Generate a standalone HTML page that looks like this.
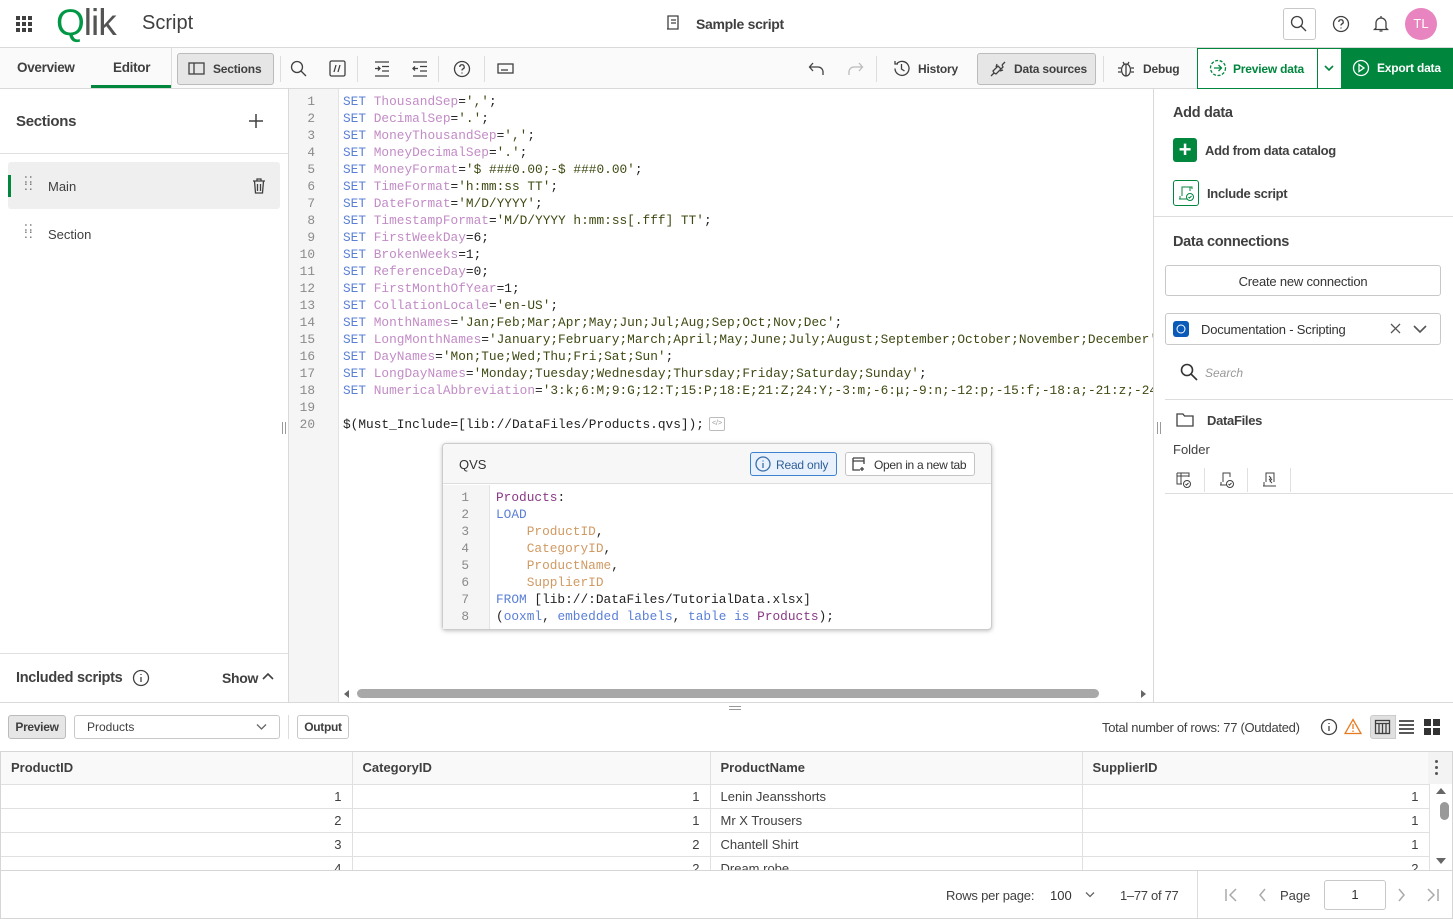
<!DOCTYPE html>
<html><head><meta charset="utf-8"><style>
*{box-sizing:border-box;margin:0;padding:0}
body{width:1453px;height:919px;position:relative;overflow:hidden;font-family:"Liberation Sans",sans-serif;color:#404040;background:#fff;font-size:13px}
.a{position:absolute}
.mono{font-family:"Liberation Mono",monospace;font-size:12.8px}
.k{color:#5a7fd6}.v{color:#c28bc6}.s{color:#3d4a12}.f{color:#d09a63}.t{color:#8a3a86}
.ln{position:absolute;left:0;width:26px;text-align:right;color:#8a8a8a}
.line{position:absolute;white-space:pre;color:#222}
svg{position:absolute;fill:none;stroke:#404040;stroke-width:1.3}
.btn{position:absolute;border:1px solid #c8c8c8;border-radius:3px;background:#fff}
.sep{position:absolute;width:1px;background:#ddd}
.tb{font-size:12px;font-weight:bold;letter-spacing:-0.2px}
td{border-right:1px solid #e0e0e0;border-bottom:1px solid #e0e0e0;height:24px;padding:0 10px;font-size:13px}
</style></head><body>

<!-- Top bar -->
<div class="a" style="left:16px;top:16px;width:16px;height:16px;display:grid;grid-template-columns:repeat(3,4px);gap:2px">
<i style="background:#404040"></i><i style="background:#404040"></i><i style="background:#404040"></i><i style="background:#404040"></i><i style="background:#404040"></i><i style="background:#404040"></i><i style="background:#404040"></i><i style="background:#404040"></i><i style="background:#404040"></i></div>
<div class="a" style="left:56px;top:2px;font-size:37px;color:#545454;letter-spacing:-1px"><span style="color:#009845">Q</span>lik</div>
<div class="a" style="left:142px;top:12px;font-size:20px;color:#404040">Script</div>
<svg style="left:664px;top:14px" width="18" height="18" viewBox="0 0 18 18"><path d="M4 2h10v13H4zM7 6h5M7 9h5M3 15h8"/></svg>
<div class="a" style="left:696px;top:16px;font-size:14px;font-weight:bold;color:#404040;letter-spacing:-0.3px">Sample script</div>
<div class="btn" style="left:1283px;top:8px;width:33px;height:32px"></div>
<svg style="left:1290px;top:15px" width="18" height="18"><circle cx="7" cy="7" r="5.5"/><path d="M11 11l5 5"/></svg>
<svg style="left:1332px;top:15px" width="18" height="18"><circle cx="9" cy="9" r="7.5"/><path d="M6.8 7a2.2 2.2 0 1 1 3 2c-.6.3-.8.7-.8 1.5M9 12.5v1"/></svg>
<svg style="left:1372px;top:14px" width="18" height="20"><path d="M4 14V9a5 5 0 0 1 10 0v5l1.5 1.5h-13zM7.5 17h3M9 2v2"/></svg>
<div class="a" style="left:1405px;top:8px;width:32px;height:32px;border-radius:50%;background:#e885c0;color:#fff;font-size:13px;text-align:center;line-height:32px">TL</div>
<div class="a" style="left:0;top:47px;width:1453px;height:1px;background:#d9d9d9"></div>

<!-- Toolbar -->
<div class="a" style="left:0;top:48px;width:1453px;height:41px;background:#fafafa;border-bottom:1px solid #d9d9d9"></div>
<div class="a" style="left:17px;top:60px;font-size:13.5px;font-weight:bold;color:#404040;letter-spacing:-0.3px">Overview</div>
<div class="a" style="left:113px;top:60px;font-size:13.5px;font-weight:bold;color:#404040;letter-spacing:-0.3px">Editor</div>
<div class="a" style="left:91px;top:85px;width:80px;height:3px;background:#00873d"></div>
<div class="a" style="left:171px;top:48px;width:1px;height:40px;background:#ddd"></div>
<div class="a" style="left:177px;top:53px;width:97px;height:32px;background:#e6e6e6;border:1px solid #bbb;border-radius:3px"></div>
<svg style="left:188px;top:61px" width="18" height="16"><rect x="1" y="2" width="15" height="11"/><path d="M6 2v11"/></svg>
<div class="a tb" style="left:213px;top:62px">Sections</div>
<div class="sep" style="left:280px;top:56px;height:26px"></div>
<svg style="left:290px;top:60px" width="18" height="18"><circle cx="7" cy="7" r="5.5"/><path d="M11 11l5 5"/></svg>
<svg style="left:329px;top:60px" width="18" height="18"><rect x="1" y="1" width="15" height="15" rx="1.5"/><path d="M7 5l-2 7M11 5l-2 7"/></svg>
<div class="sep" style="left:357px;top:56px;height:26px"></div>
<svg style="left:373px;top:60px" width="18" height="18"><path d="M2 2h14M9 6.5h7M9 11h7M2 16h14M2 8.5h5M5 6.5l2 2-2 2"/></svg>
<svg style="left:411px;top:60px" width="18" height="18"><path d="M2 2h14M9 6.5h7M9 11h7M2 16h14M2 8.5h5M4 6.5l-2 2 2 2"/></svg>
<div class="sep" style="left:438px;top:56px;height:26px"></div>
<svg style="left:453px;top:60px" width="18" height="18"><circle cx="9" cy="9" r="7.5"/><path d="M6.8 7a2.2 2.2 0 1 1 3 2c-.6.3-.8.7-.8 1.5M9 12.5v1"/></svg>
<div class="sep" style="left:484px;top:56px;height:26px"></div>
<svg style="left:497px;top:61px" width="18" height="16"><rect x="1" y="3" width="15" height="9"/><path d="M4 9h7"/></svg>
<svg style="left:808px;top:60px" width="18" height="18"><path d="M5 3L1.5 7 5 11M2 7h8a5 5 0 0 1 5 5v3"/></svg>
<svg style="left:846px;top:60px;stroke:#bbb" width="18" height="18"><path d="M13 3l3.5 4L13 11M16 7H8a5 5 0 0 0-5 5v3"/></svg>
<div class="sep" style="left:876px;top:56px;height:26px"></div>
<svg style="left:892px;top:59px" width="19" height="19"><path d="M3 9.5a7 7 0 1 0 2-5M3 2v3h3M9.5 5v5l3 2"/></svg>
<div class="a tb" style="left:918px;top:62px">History</div>
<div class="a" style="left:977px;top:53px;width:119px;height:32px;background:#e6e6e6;border:1px solid #bbb;border-radius:3px"></div>
<svg style="left:989px;top:60px" width="18" height="18"><path d="M2 16l3-3M16 2l-3 3M5 13l-1-2 5-5 3 3-5 5zM13 5l1 2-5 5M7 7l1-3M11 11l3-1"/></svg>
<div class="a tb" style="left:1014px;top:62px">Data sources</div>
<div class="sep" style="left:1103px;top:56px;height:26px"></div>
<svg style="left:1117px;top:59px" width="18" height="20"><ellipse cx="9" cy="11" rx="4.5" ry="6"/><path d="M9 5v12M4 9H1M4 13H1M14 9h3M14 13h3M6 3l1.5 2.5M12 3l-1.5 2.5"/></svg>
<div class="a tb" style="left:1143px;top:62px">Debug</div>
<div class="a" style="left:1197px;top:48px;width:121px;height:41px;border:1px solid #00873d;background:#fff"></div>
<svg style="left:1209px;top:59px;stroke:#00873d" width="18" height="18"><circle cx="9" cy="9" r="7.5" stroke-dasharray="3 1.6"/><path d="M5 9h7M9.5 6l3 3-3 3"/></svg>
<div class="a tb" style="left:1233px;top:62px;color:#00873d">Preview data</div>
<div class="a" style="left:1317px;top:48px;width:25px;height:41px;border:1px solid #00873d;background:#fff"></div>
<svg style="left:1323px;top:63px;stroke:#00873d;stroke-width:1.6" width="12" height="10"><path d="M2 3l4 4 4-4"/></svg>
<div class="a" style="left:1342px;top:48px;width:111px;height:41px;background:#00873d"></div>
<svg style="left:1352px;top:59px;stroke:#fff" width="18" height="18"><circle cx="9" cy="9" r="7.5"/><path d="M7 5.5v7l5-3.5z"/></svg>
<div class="a tb" style="left:1377px;top:61px;color:#fff">Export data</div>

<!-- Left panel -->
<div class="a" style="left:288px;top:89px;width:1px;height:614px;background:#d9d9d9"></div>
<div class="a" style="left:16px;top:113px;font-size:15px;font-weight:bold;letter-spacing:-0.3px">Sections</div>
<svg style="left:248px;top:113px;stroke-width:1.5" width="16" height="16"><path d="M8 1v14M1 8h14"/></svg>
<div class="a" style="left:0;top:153px;width:288px;height:1px;background:#e0e0e0"></div>
<div class="a" style="left:8px;top:162px;width:272px;height:47px;background:#efefef;border-radius:3px"></div>
<div class="a" style="left:8px;top:175px;width:3px;height:22px;background:#00873d"></div>
<div class="a" style="left:24px;top:179px;color:#666;font-size:12px;line-height:5px;letter-spacing:1px">⁚⁚<br>⁚⁚</div>
<div class="a" style="left:48px;top:179px;font-size:13px">Main</div>
<svg style="left:252px;top:178px" width="14" height="16"><path d="M1 3h12M5 3V1h4v2M2.5 3l1 12h7l1-12M5.5 6v7M8.5 6v7"/></svg>
<div class="a" style="left:24px;top:227px;color:#666;font-size:12px;line-height:5px;letter-spacing:1px">⁚⁚<br>⁚⁚</div>
<div class="a" style="left:48px;top:227px;font-size:13px">Section</div>
<div class="a" style="left:0;top:653px;width:288px;height:1px;background:#e0e0e0"></div>
<div class="a" style="left:16px;top:670px;font-size:14.5px;font-weight:bold;letter-spacing:-0.3px">Included scripts</div>
<svg style="left:132px;top:669px" width="18" height="18"><circle cx="9" cy="9" r="7.5"/><path d="M9 8v5M9 5v1"/></svg>
<div class="a" style="left:222px;top:670px;font-size:14px;font-weight:bold;letter-spacing:-0.3px">Show</div>
<svg style="left:261px;top:672px;stroke-width:1.6" width="14" height="10"><path d="M2 7l5-5 5 5"/></svg>
<div class="a" style="left:282px;top:422px;width:4px;height:12px;border-left:1px solid #999;border-right:1px solid #999"></div>

<!-- Editor -->
<div class="a" style="left:289px;top:89px;width:50px;height:614px;background:#f5f5f5;border-right:1px solid #e3e3e3"></div>
<div class="a mono" style="left:289px;top:93px;width:864px;height:340px">
<div style="position:relative;line-height:17px">
<div class="ln" style="top:0">1</div><div class="line" style="left:54px;top:0"><span class="k">SET</span> <span class="v">ThousandSep</span>=<span class="s">','</span>;</div>
<div class="ln" style="top:17px">2</div><div class="line" style="left:54px;top:17px"><span class="k">SET</span> <span class="v">DecimalSep</span>=<span class="s">'.'</span>;</div>
<div class="ln" style="top:34px">3</div><div class="line" style="left:54px;top:34px"><span class="k">SET</span> <span class="v">MoneyThousandSep</span>=<span class="s">','</span>;</div>
<div class="ln" style="top:51px">4</div><div class="line" style="left:54px;top:51px"><span class="k">SET</span> <span class="v">MoneyDecimalSep</span>=<span class="s">'.'</span>;</div>
<div class="ln" style="top:68px">5</div><div class="line" style="left:54px;top:68px"><span class="k">SET</span> <span class="v">MoneyFormat</span>=<span class="s">'$ ###0.00;-$ ###0.00'</span>;</div>
<div class="ln" style="top:85px">6</div><div class="line" style="left:54px;top:85px"><span class="k">SET</span> <span class="v">TimeFormat</span>=<span class="s">'h:mm:ss TT'</span>;</div>
<div class="ln" style="top:102px">7</div><div class="line" style="left:54px;top:102px"><span class="k">SET</span> <span class="v">DateFormat</span>=<span class="s">'M/D/YYYY'</span>;</div>
<div class="ln" style="top:119px">8</div><div class="line" style="left:54px;top:119px"><span class="k">SET</span> <span class="v">TimestampFormat</span>=<span class="s">'M/D/YYYY h:mm:ss[.fff] TT'</span>;</div>
<div class="ln" style="top:136px">9</div><div class="line" style="left:54px;top:136px"><span class="k">SET</span> <span class="v">FirstWeekDay</span>=6;</div>
<div class="ln" style="top:153px">10</div><div class="line" style="left:54px;top:153px"><span class="k">SET</span> <span class="v">BrokenWeeks</span>=1;</div>
<div class="ln" style="top:170px">11</div><div class="line" style="left:54px;top:170px"><span class="k">SET</span> <span class="v">ReferenceDay</span>=0;</div>
<div class="ln" style="top:187px">12</div><div class="line" style="left:54px;top:187px"><span class="k">SET</span> <span class="v">FirstMonthOfYear</span>=1;</div>
<div class="ln" style="top:204px">13</div><div class="line" style="left:54px;top:204px"><span class="k">SET</span> <span class="v">CollationLocale</span>=<span class="s">'en-US'</span>;</div>
<div class="ln" style="top:221px">14</div><div class="line" style="left:54px;top:221px"><span class="k">SET</span> <span class="v">MonthNames</span>=<span class="s">'Jan;Feb;Mar;Apr;May;Jun;Jul;Aug;Sep;Oct;Nov;Dec'</span>;</div>
<div class="ln" style="top:238px">15</div><div class="line" style="left:54px;top:238px;width:810px;overflow:hidden"><span class="k">SET</span> <span class="v">LongMonthNames</span>=<span class="s">'January;February;March;April;May;June;July;August;September;October;November;December'</span>;</div>
<div class="ln" style="top:255px">16</div><div class="line" style="left:54px;top:255px"><span class="k">SET</span> <span class="v">DayNames</span>=<span class="s">'Mon;Tue;Wed;Thu;Fri;Sat;Sun'</span>;</div>
<div class="ln" style="top:272px">17</div><div class="line" style="left:54px;top:272px"><span class="k">SET</span> <span class="v">LongDayNames</span>=<span class="s">'Monday;Tuesday;Wednesday;Thursday;Friday;Saturday;Sunday'</span>;</div>
<div class="ln" style="top:289px">18</div><div class="line" style="left:54px;top:289px;width:810px;overflow:hidden"><span class="k">SET</span> <span class="v">NumericalAbbreviation</span>=<span class="s">'3:k;6:M;9:G;12:T;15:P;18:E;21:Z;24:Y;-3:m;-6:μ;-9:n;-12:p;-15:f;-18:a;-21:z;-24:y'</span>;</div>
<div class="ln" style="top:306px">19</div>
<div class="ln" style="top:323px">20</div><div class="line" style="left:54px;top:323px">$(Must_Include=[lib://DataFiles/Products.qvs]);</div>
</div></div>
<div class="a" style="left:709px;top:417px;width:16px;height:14px;border:1px solid #bbb;border-radius:2px;font-size:7px;color:#999;text-align:center;line-height:12px">&lt;/&gt;</div>

<!-- Popup -->
<div class="a" style="left:442px;top:443px;width:550px;height:187px;background:#fff;border:1px solid #ccc;border-radius:4px;box-shadow:0 1px 4px rgba(0,0,0,.25)"></div>
<div class="a" style="left:443px;top:444px;width:548px;height:40px;background:#f7f7f7;border-bottom:1px solid #ddd;border-radius:4px 4px 0 0"></div>
<div class="a" style="left:459px;top:457px;font-size:13px;color:#333">QVS</div>
<div class="a" style="left:750px;top:452px;width:87px;height:24px;border:1px solid #3b82d0;border-radius:3px;background:#e9f2fc"></div>
<svg style="left:755px;top:456px;stroke:#3b6ea8" width="16" height="16"><circle cx="8" cy="8" r="7"/><path d="M8 7v5M8 4.5v1"/></svg>
<div class="a" style="left:776px;top:458px;font-size:12px;color:#2f5f9a;letter-spacing:-0.2px">Read only</div>
<div class="a" style="left:845px;top:452px;width:130px;height:24px;border:1px solid #c4c4c4;border-radius:3px;background:#fff"></div>
<svg style="left:852px;top:457px" width="14" height="14"><path d="M1 1h11v6M1 1v12h7M1 4h11M10 10v4M8 12h4"/></svg>
<div class="a" style="left:874px;top:458px;font-size:12px;color:#333;letter-spacing:-0.3px">Open in a new tab</div>
<div class="a" style="left:443px;top:485px;width:47px;height:144px;background:#f5f5f5;border-right:1px solid #e3e3e3"></div>
<div class="a mono" style="left:443px;top:489px;width:540px;line-height:17px">
<div style="position:relative">
<div class="ln" style="top:0">1</div><div class="line" style="left:53px;top:0"><span class="t">Products</span>:</div>
<div class="ln" style="top:17px">2</div><div class="line" style="left:53px;top:17px"><span class="k">LOAD</span></div>
<div class="ln" style="top:34px">3</div><div class="line" style="left:53px;top:34px">    <span class="f">ProductID</span>,</div>
<div class="ln" style="top:51px">4</div><div class="line" style="left:53px;top:51px">    <span class="f">CategoryID</span>,</div>
<div class="ln" style="top:68px">5</div><div class="line" style="left:53px;top:68px">    <span class="f">ProductName</span>,</div>
<div class="ln" style="top:85px">6</div><div class="line" style="left:53px;top:85px">    <span class="f">SupplierID</span></div>
<div class="ln" style="top:102px">7</div><div class="line" style="left:53px;top:102px"><span class="k">FROM</span> [lib://:DataFiles/TutorialData.xlsx]</div>
<div class="ln" style="top:119px">8</div><div class="line" style="left:53px;top:119px">(<span class="k">ooxml</span>, <span class="k">embedded labels</span>, <span class="k">table is</span> <span class="t">Products</span>);</div>
</div></div>

<!-- h scrollbar -->
<div class="a" style="left:344px;top:690px;width:0;height:0;border:4px solid transparent;border-right:5px solid #666;border-left:0"></div>
<div class="a" style="left:357px;top:689px;width:742px;height:9px;border-radius:5px;background:#a8a8a8"></div>
<div class="a" style="left:1141px;top:690px;width:0;height:0;border:4px solid transparent;border-left:5px solid #666;border-right:0"></div>

<!-- Right panel -->
<div class="a" style="left:1153px;top:89px;width:1px;height:614px;background:#d9d9d9"></div>
<div class="a" style="left:1157px;top:422px;width:4px;height:12px;border-left:1px solid #999;border-right:1px solid #999"></div>
<div class="a" style="left:1173px;top:105px;font-size:14.5px;font-weight:bold;letter-spacing:-0.3px">Add data</div>
<div class="a" style="left:1173px;top:138px;width:24px;height:24px;background:#00873d;border-radius:3px;color:#fff;text-align:center;font-size:22px;line-height:23px;font-weight:bold">+</div>
<div class="a" style="left:1205px;top:143px;font-size:13px;font-weight:bold;color:#404040;letter-spacing:-0.3px">Add from data catalog</div>
<div class="a" style="left:1173px;top:180px;width:26px;height:26px;border:1px solid #00873d;border-radius:3px"></div>
<svg style="left:1177px;top:184px;stroke:#00873d;stroke-width:1" width="19" height="19"><path d="M5 12V3h8v4M2 15h8M3 12v3M13 3h2v2"/><circle cx="13" cy="13" r="3.5"/><path d="M11.5 13l1 1 2-2"/></svg>
<div class="a" style="left:1207px;top:186px;font-size:13px;font-weight:bold;letter-spacing:-0.3px">Include script</div>
<div class="a" style="left:1154px;top:216px;width:299px;height:1px;background:#ddd"></div>
<div class="a" style="left:1173px;top:234px;font-size:14.5px;font-weight:bold;letter-spacing:-0.3px">Data connections</div>
<div class="btn" style="left:1165px;top:265px;width:276px;height:31px"></div>
<div class="a" style="left:1165px;top:274px;width:276px;text-align:center;font-size:13px;color:#333;letter-spacing:-0.2px">Create new connection</div>
<div class="btn" style="left:1165px;top:313px;width:276px;height:32px"></div>
<div class="a" style="left:1173px;top:321px;width:16px;height:16px;background:#0a5ab8;border-radius:3px"></div>
<svg style="left:1175px;top:323px;stroke:#fff;stroke-width:1" width="12" height="12"><circle cx="6" cy="6" r="4"/></svg>
<div class="a" style="left:1201px;top:322px;font-size:13px;color:#333;letter-spacing:-0.2px">Documentation - Scripting</div>
<svg style="left:1390px;top:323px;stroke:#555" width="11" height="11"><path d="M1 1l9 9M10 1l-9 9"/></svg>
<svg style="left:1413px;top:324px;stroke:#555;stroke-width:1.6" width="14" height="10"><path d="M1 2l6 6 6-6"/></svg>
<svg style="left:1180px;top:363px;stroke:#333;stroke-width:1.6" width="19" height="19"><circle cx="7" cy="7" r="5.5"/><path d="M11 11l6 6"/></svg>
<div class="a" style="left:1205px;top:366px;font-size:12px;font-style:italic;color:#999">Search</div>
<div class="a" style="left:1165px;top:399px;width:288px;height:1px;background:#ddd"></div>
<svg style="left:1176px;top:412px" width="18" height="15"><path d="M1 2h6l1.5 2H17v10H1z"/></svg>
<div class="a" style="left:1207px;top:413px;font-size:13px;font-weight:bold;letter-spacing:-0.3px">DataFiles</div>
<div class="a" style="left:1173px;top:442px;font-size:13px">Folder</div>
<svg style="left:1175px;top:471px;stroke-width:1" width="18" height="18"><path d="M2 2h12v4M2 2v11h5M2 5h12M6 2v11"/><circle cx="12" cy="13" r="3.5"/><path d="M10.5 13l1 1 2-2"/></svg>
<div class="sep" style="left:1204px;top:468px;height:24px;background:#e0e0e0"></div>
<svg style="left:1218px;top:471px;stroke-width:1" width="18" height="18"><path d="M5 11V2h7v4M2 14h7M3 11v3"/><circle cx="12" cy="13" r="3.5"/><path d="M10.5 13l1 1 2-2"/></svg>
<div class="sep" style="left:1247px;top:468px;height:24px;background:#e0e0e0"></div>
<svg style="left:1261px;top:471px;stroke-width:1" width="18" height="18"><path d="M5 11V2h8v9M2 15h13M3 11v4M8 5l2 2-2 2M11 8l-2 2 2 2"/></svg>
<div class="sep" style="left:1290px;top:468px;height:24px;background:#e0e0e0"></div>
<div class="a" style="left:1165px;top:493px;width:288px;height:1px;background:#ddd"></div>

<!-- Bottom -->
<div class="a" style="left:0;top:702px;width:1453px;height:1px;background:#d9d9d9"></div>
<div class="a" style="left:729px;top:706px;width:12px;height:1px;background:#999"></div>
<div class="a" style="left:729px;top:709px;width:12px;height:1px;background:#999"></div>
<div class="a" style="left:8px;top:715px;width:58px;height:24px;background:#e6e6e6;border:1px solid #bbb;border-radius:3px;font-size:12px;font-weight:bold;text-align:center;line-height:22px;letter-spacing:-0.3px">Preview</div>
<div class="btn" style="left:74px;top:715px;width:206px;height:24px"></div>
<div class="a" style="left:87px;top:720px;font-size:12px">Products</div>
<svg style="left:256px;top:723px;stroke:#666" width="11" height="8"><path d="M1 1.5l4.5 4.5 4.5-4.5"/></svg>
<div class="sep" style="left:288px;top:715px;height:24px"></div>
<div class="btn" style="left:297px;top:715px;width:52px;height:24px;font-size:12px;font-weight:bold;text-align:center;line-height:22px;letter-spacing:-0.3px">Output</div>
<div class="a" style="left:1102px;top:720px;font-size:13px;color:#404040;letter-spacing:-0.3px">Total number of rows: 77 (Outdated)</div>
<svg style="left:1320px;top:718px" width="18" height="18"><circle cx="9" cy="9" r="7.5"/><path d="M9 8v5M9 5v1"/></svg>
<svg style="left:1344px;top:718px;stroke:#e8791f" width="18" height="17"><path d="M9 1.5L17 15.5H1z M9 6v5M9 12.5v1.5"/></svg>
<div class="a" style="left:1370px;top:715px;width:26px;height:24px;background:#e0e0e0;border:1px solid #ccc;border-radius:3px 0 0 3px"></div>
<svg style="left:1374px;top:719px" width="17" height="16"><rect x="1.5" y="1.5" width="14" height="13"/><path d="M1.5 4.5h14M5 4.5v10M8.5 4.5v10M12 4.5v10" stroke-width="1.3"/></svg>
<svg style="left:1398px;top:719px;stroke-width:1.8" width="17" height="16"><path d="M1 2h15M1 6h15M1 10h15M1 14h15"/></svg>
<div class="a" style="left:1424px;top:719px;width:7px;height:7px;background:#333"></div><div class="a" style="left:1433px;top:719px;width:7px;height:7px;background:#333"></div>
<div class="a" style="left:1424px;top:728px;width:7px;height:7px;background:#333"></div><div class="a" style="left:1433px;top:728px;width:7px;height:7px;background:#333"></div>

<div class="a" style="left:0;top:751px;width:1453px;height:168px;border:1px solid #d6d6d6;overflow:hidden">
<table style="border-collapse:collapse;width:1428px;table-layout:fixed;color:#404040">
<colgroup><col style="width:351px"><col style="width:358px"><col style="width:372px"><col style="width:347px"></colgroup>
<tr style="background:#f9f9f9"><td style="height:32px;font-weight:bold;font-size:13px">ProductID</td><td style="font-weight:bold">CategoryID</td><td style="font-weight:bold">ProductName</td><td style="font-weight:bold">SupplierID</td></tr>
<tr><td style="text-align:right">1</td><td style="text-align:right">1</td><td>Lenin Jeansshorts</td><td style="text-align:right">1</td></tr>
<tr><td style="text-align:right">2</td><td style="text-align:right">1</td><td>Mr X Trousers</td><td style="text-align:right">1</td></tr>
<tr><td style="text-align:right">3</td><td style="text-align:right">2</td><td>Chantell Shirt</td><td style="text-align:right">1</td></tr>
<tr><td style="text-align:right">4</td><td style="text-align:right">2</td><td>Dream robe</td><td style="text-align:right">2</td></tr>
</table>
<div class="a" style="left:1427px;top:0;width:25px;height:32px;background:#f3f3f3"></div>
<div class="a" style="left:1434px;top:8px;width:3px;height:3px;background:#555;box-shadow:0 6px 0 #555,0 12px 0 #555;border-radius:50%"></div>
<div class="a" style="left:1435px;top:36px;width:0;height:0;border:5px solid transparent;border-bottom:6px solid #666;border-top:0"></div>
<div class="a" style="left:1439px;top:50px;width:9px;height:18px;background:#999;border-radius:5px"></div>
<div class="a" style="left:1435px;top:106px;width:0;height:0;border:5px solid transparent;border-top:6px solid #666;border-bottom:0"></div>
<div class="a" style="left:0;top:118px;width:1453px;height:50px;background:#fff;border-top:1px solid #d6d6d6"></div>
</div>
<div class="a" style="left:946px;top:888px;font-size:13px;letter-spacing:-0.2px">Rows per page:</div>
<div class="a" style="left:1050px;top:888px;font-size:13px;color:#333">100</div>
<svg style="left:1085px;top:891px;stroke:#666" width="10" height="8"><path d="M1 1.5l4 4 4-4"/></svg>
<div class="a" style="left:1120px;top:888px;font-size:13px;letter-spacing:-0.3px">1–77 of 77</div>
<div class="a" style="left:1197px;top:871px;width:1px;height:47px;background:#ddd"></div>
<svg style="left:1224px;top:887px;stroke:#aaa;stroke-width:1.5" width="14" height="16"><path d="M2 2v12M12 2L6 8l6 6"/></svg>
<svg style="left:1257px;top:887px;stroke:#aaa;stroke-width:1.5" width="10" height="16"><path d="M8 2L3 8l5 6"/></svg>
<div class="a" style="left:1280px;top:888px;font-size:13px">Page</div>
<div class="btn" style="left:1324px;top:880px;width:62px;height:30px;font-size:13px;text-align:center;line-height:28px;color:#333">1</div>
<svg style="left:1397px;top:887px;stroke:#aaa;stroke-width:1.5" width="10" height="16"><path d="M2 2l5 6-5 6"/></svg>
<svg style="left:1426px;top:887px;stroke:#aaa;stroke-width:1.5" width="14" height="16"><path d="M12 2v12M2 2l6 6-6 6"/></svg>
</body></html>
